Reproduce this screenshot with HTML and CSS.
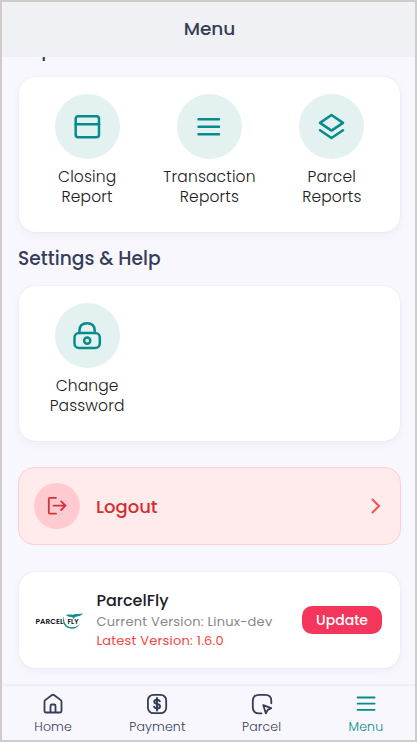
FILE: index.html
```html
<!DOCTYPE html>
<html lang="en">
<head>
<meta charset="utf-8">
<title>Menu</title>
<link rel="stylesheet" href="styles.css">
</head>
<body>
<div class="screen">
  <header class="topbar"><h1>Menu</h1></header>
  <main class="content">
    <h2 class="heading heading-first">Reports</h2>
    <section class="card grid">
      <div class="tile">
        <span class="circle"><svg width="28" height="28" viewBox="0 0 28 28"><rect x="2.700" y="3.200" width="23.300" height="21" rx="2.500"/><path d="M2.700 11.200h23.300"/></svg></span>
        <span class="label">Closing<br>Report</span>
      </div>
      <div class="tile">
        <span class="circle"><svg width="28" height="28" viewBox="0 0 28 28"><path d="M3.500 6.200h20.500M3.500 13.700h20.500M3.500 21.200h20.500"/></svg></span>
        <span class="label">Transaction<br>Reports</span>
      </div>
      <div class="tile">
        <span class="circle"><svg width="28" height="28" viewBox="0 0 28 28"><path d="M13.500 2 25 9.900 13.500 17.600 2 9.900zM2 17.300 13.500 25 25 17.300"/></svg></span>
        <span class="label">Parcel<br>Reports</span>
      </div>
    </section>
    <h2 class="heading">Settings &amp; Help</h2>
    <section class="card grid">
      <div class="tile">
        <span class="circle"><svg width="30" height="30" viewBox="0 0 30 30"><rect x="2.500" y="12" width="25.300" height="15" rx="4.500"/><path d="M7.500 12V9.500C7.500 5 10 2.200 15.100 2.200S22.700 5 22.700 9.500V12"/><circle cx="15.200" cy="19.600" r="3.100"/></svg></span>
        <span class="label">Change<br>Password</span>
      </div>
    </section>
    <section class="logout">
      <span class="logout-icon"><svg width="24" height="24" viewBox="0 0 24 24"><path d="M11 3.800H5Q3.800 3.800 3.800 5v13.500q0 1.200 1.200 1.200h6M8.500 11.700h12M16.200 7.400l4.300 4.300-4.300 4.300"/></svg></span>
      <span class="logout-text">Logout</span>
      <svg class="chevron" width="12" height="18" viewBox="0 0 12 18"><path d="m2 2 7 7-7 7"/></svg>
    </section>
    <section class="card about">
      <svg class="logo" width="50" height="20" viewBox="0 0 50 20">
        <path class="swoosh" d="M28.500 6C26.500 12 29.500 18.500 36.500 18.700c4.200 .1 7-2 8.500-5-2 2.400-5 3.600-8 3.600-5.500 0-8.500-4.700-8.500-11.300z"/>
        <path class="bird" d="M31 5c2.500-.8 5-.3 7-.3 2-1.200 4-.6 5.500-.7 1.500-.2 3-.1 4.500-.5-1.500 2.500-5.500 2.800-8 3.400l-1.500 2-1-1.600c-2.500-.1-5-.7-6.500-2.300z"/>
        <text x="0.500" y="14" textLength="28" lengthAdjust="spacingAndGlyphs">PARCEL</text>
        <text x="32.500" y="14" textLength="11" lengthAdjust="spacingAndGlyphs">FLY</text>
      </svg>
      <div class="versions">
        <div class="name">ParcelFly</div>
        <div class="current">Current Version: Linux-dev</div>
        <div class="latest">Latest Version: 1.6.0</div>
      </div>
      <button class="update">Update</button>
    </section>
  </main>
  <nav class="tabs">
    <a class="tab"><svg width="22" height="22" viewBox="0 0 22 22"><path d="M2.500 8.500Q2.500 7.700 3.200 7.100L9.700 2.200q1.300-1 2.600 0l6.500 4.900q.7.600.7 1.400V18q0 1.500-1.500 1.500H4Q2.500 19.500 2.500 18zM8.500 19.500V13q0-1.500 1.500-1.500h2q1.500 0 1.500 1.500v6.500"/></svg><span>Home</span></a>
    <a class="tab"><svg width="22" height="22" viewBox="0 0 22 22"><rect x="1.900" y="1.900" width="18.300" height="18.300" rx="5.500"/><path class="dollar" d="M13.800 8.300C13.200 7 12.200 6.700 11 6.700c-1.500 0-2.700.7-2.700 2.100 0 3 5.700 1.400 5.700 4.500 0 1.400-1.300 2.200-2.900 2.200-1.400 0-2.600-.5-3.100-1.800M11 5v12.400"/></svg><span>Payment</span></a>
    <a class="tab"><svg width="22" height="22" viewBox="0 0 22 22"><path d="M10.500 20.300H8Q1.800 20.300 1.800 14.300V8Q1.800 1.800 8 1.800h6.300q6 0 6 6v2.500M12.300 12.200l7.900 2.900-3.500 1.800-1.800 3.500z"/></svg><span>Parcel</span></a>
    <a class="tab active"><svg width="22" height="22" viewBox="0 0 22 22"><path d="M2.600 4.500h17M2.600 10.700h17M2.600 16.900h17"/></svg><span>Menu</span></a>
  </nav>
</div>
</body>
</html>
```
FILE: styles.css
```css
* { box-sizing: border-box; }
body {
  margin: 0;
  font-family: Poppins, Inter, "Liberation Sans", sans-serif;
}
svg {
  display: block;
  flex: none;
  fill: none;
  stroke: currentColor;
  stroke-width: 2.5;
  stroke-linecap: round;
  stroke-linejoin: round;
}
.screen {
  display: flex;
  flex-direction: column;
  width: 417px;
  height: 742px;
  border: 2px solid #d0cacb;
  background: #f8f7fe;
  overflow: hidden;
}
.topbar {
  flex: none;
  display: flex;
  align-items: center;
  justify-content: center;
  height: 55px;
  padding-left: 2px;
  background: #eff1f5;
  color: #353d58;
}
.topbar h1 { margin: -2px 0 0; font-size: 18.500px; font-weight: 500; line-height: 24px; }
.content { height: 628px; padding: 0 15px 0 17px; overflow: hidden; }
.heading {
  margin: 14px 0 15px -1px;
  color: #353d58;
  font-size: 18.700px;
  font-weight: 500;
  line-height: 25px;
}
.heading-first { margin-top: -20px; }
.card {
  background: #fff;
  border-radius: 16px;
  box-shadow: 0 0 1px rgba(0, 0, 0, .16), 0 3px 10px rgba(30, 30, 80, .045);
}
.grid {
  display: grid;
  grid-template-columns: repeat(3, 1fr);
  height: 155px;
  padding: 17px 7px 0;
}
.tile { display: flex; flex-direction: column; align-items: center; }
.circle {
  display: flex;
  align-items: center;
  justify-content: center;
  width: 65px;
  height: 65px;
  border-radius: 50%;
  background: #e3f2f1;
  color: #078b8b;
}
.label {
  margin-top: 8px;
  color: #202020;
  font-size: 15.500px;
  font-weight: 300;
  line-height: 20px;
  letter-spacing: .15px;
  text-align: center;
}
.logout {
  display: flex;
  align-items: center;
  height: 78px;
  margin: 26px -1px 27px;
  padding: 0 18.500px 0 15px;
  border: 1px solid #ffcdd4;
  border-radius: 16px;
  background: #ffeaec;
}
.logout-icon {
  display: flex;
  align-items: center;
  justify-content: center;
  width: 46px;
  height: 46px;
  border-radius: 50%;
  background: #ffcbd0;
  color: #d43238;
}
.logout-icon svg { stroke-width: 1.8; }
.logout-text { flex: 1; margin-left: 16px; color: #d32f32; font-size: 18px; font-weight: 500; }
.chevron { color: #ef5350; stroke-width: 2; stroke-linecap: butt; stroke-linejoin: miter; }
.about { display: flex; align-items: center; height: 96px; padding: 0 18px 0 16px; }
.logo text { fill: #111; stroke: none; font-size: 7.500px; font-weight: 600; }
.swoosh, .bird { fill: #148c91; stroke: none; }
.versions { flex: 1; margin-left: 11.500px; white-space: nowrap; }
.name { color: #202025; font-size: 16px; font-weight: 500; line-height: 22px; }
.current { color: #888; font-size: 13px; line-height: 19px; letter-spacing: .22px; }
.latest { color: #f5453d; font-size: 13px; line-height: 19px; letter-spacing: .22px; }
.update {
  width: 80px;
  height: 28px;
  padding: 0;
  border: 0;
  border-radius: 10px;
  background: #f5365c;
  color: #fff;
  font: inherit;
  font-size: 14px;
  font-weight: 500;
}
.tabs {
  flex: 1;
  display: grid;
  grid-template-columns: repeat(4, 1fr);
  margin: 0 -3px 0 -1px;
  border-top: 1px solid #ececf2;
  box-shadow: 0 -1px 2px rgba(0, 0, 0, .03);
}
.tab {
  display: flex;
  flex-direction: column;
  align-items: center;
  padding-top: 7px;
  color: #343c56;
  font-size: 12.500px;
  font-weight: 300;
  line-height: 18px;
  letter-spacing: .15px;
}
.tab svg { stroke-width: 1.8; margin-bottom: 3px; }
.tab .dollar { stroke-width: 2; }
.active { color: #078b8b; }
```
